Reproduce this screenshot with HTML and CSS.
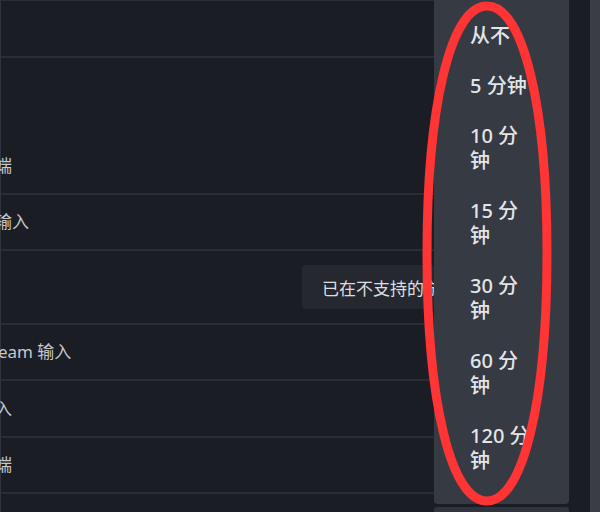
FILE: index.html
```html
<!DOCTYPE html>
<html lang="zh-CN">
<head>
<meta charset="utf-8">
<title>控制器设置</title>
<link rel="stylesheet" href="styles.css">
</head>
<body>
<div class="app">
  <div class="panel">
    <div class="list">
      <div class="row r1"></div>
      <div class="row r2"><span class="label">客户端</span></div>
      <div class="row r3"><span class="label">手柄输入</span></div>
      <div class="row r4"><div class="tooltip">已在不支持的游戏中禁用</div></div>
      <div class="row r5"><span class="label">在 Steam 输入</span></div>
      <div class="row r6"><span class="label">无输入</span></div>
      <div class="row r7"><span class="label">客户端</span></div>
      <div class="row r8"><div class="select"></div></div>
    </div>
    <div class="dropdown">
      <div class="item">从不</div>
      <div class="item">5 分钟</div>
      <div class="item">10 分钟</div>
      <div class="item">15 分钟</div>
      <div class="item">30 分钟</div>
      <div class="item">60 分钟</div>
      <div class="item">120 分钟</div>
    </div>
  </div>
  <div class="gutter"></div>
  <div class="scrollbar"></div>
  <svg class="mark" width="600" height="512" viewBox="0 0 600 512">
    <path d="M487,6 C523,6 547,105 547,253.5 C547,402 523,501 487,501 C451,501 427,402 427,253.5 C427,105 451,6 487,6 Z" fill="none" stroke="#ff3434" stroke-width="9"/>
  </svg>
</div>
</body>
</html>
```
FILE: styles.css
```css
html, body {
  margin: 0;
  padding: 0;
  background: #1a1d24;
  overflow: hidden;
}

.app {
  position: relative;
  display: flex;
  width: 600px;
  height: 512px;
  font-family: "Noto Sans", "Noto Sans CJK SC", sans-serif;
  overflow: hidden;
}

.panel {
  position: relative;
  width: 568px;
  border-left: 1px solid #30333b;
  border-top: 1px solid #2a2d35;
  box-sizing: content-box;
}

.list {
  display: flex;
  flex-direction: column;
}

.row {
  display: flex;
  align-items: center;
  box-sizing: border-box;
  border-bottom: 2px solid #2a2d35;
  position: relative;
}

.r1 { height: 57px; }
.r2 { height: 137px; align-items: flex-end; padding-bottom: 15px; }
.r3 { height: 56px; }
.r4 { height: 74px; }
.r5 { height: 56px; }
.r6 { height: 57px; }
.r7 { height: 56px; }
.r8 { height: 40px; border-bottom: none; align-items: flex-start; justify-content: flex-end; padding-top: 13px; }

.label {
  margin-left: -40px;
  font-size: 17px;
  line-height: 24px;
  color: #c6c9cd;
  white-space: nowrap;
}

.tooltip {
  position: absolute;
  left: 301px;
  top: 14px;
  width: 132px;
  height: 44px;
  box-sizing: border-box;
  padding-left: 20px;
  display: flex;
  align-items: center;
  overflow: hidden;
  background: #25282f;
  border-radius: 4px 0 0 4px;
  font-size: 17px;
  color: #dcdfe2;
  white-space: nowrap;
}

.select {
  width: 135px;
  height: 20px;
  background: #30343c;
  border-radius: 3px;
}

.dropdown {
  position: absolute;
  left: 433px;
  top: -1px;
  width: 135px;
  height: 504px;
  box-sizing: border-box;
  padding-top: 10px;
  background: #363a42;
  border-radius: 0 0 4px 4px;
  display: flex;
  flex-direction: column;
}

.item {
  padding: 12.5px 0 12.5px 36px;
  width: 62px;
  font-size: 20px;
  line-height: 25px;
  font-weight: 500;
  color: #e3e5e8;
}

.gutter {
  width: 21px;
  background: #1a1d24;
}

.scrollbar {
  width: 10px;
  background: #3a3d45;
}

.mark {
  position: absolute;
  left: 0;
  top: 0;
  pointer-events: none;
}
```
